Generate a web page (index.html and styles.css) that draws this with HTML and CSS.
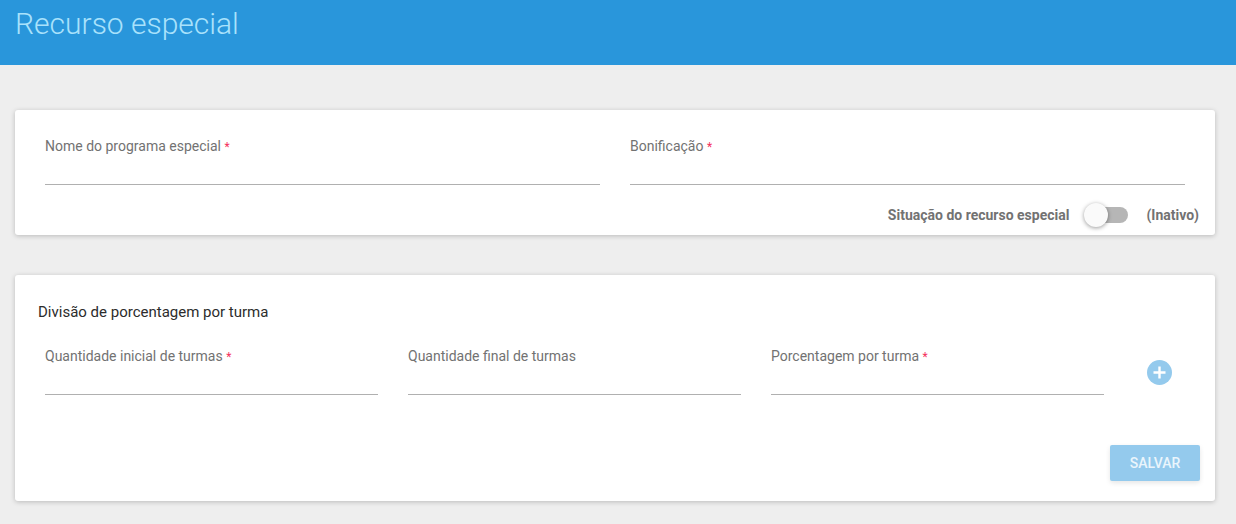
FILE: index.html
```html
<!DOCTYPE html>
<html lang="pt-BR">
<head>
<meta charset="utf-8">
<title>Recurso especial</title>
<link rel="stylesheet" href="styles.css">
</head>
<body>
<header class="page-header"><h1 class="page-title">Recurso especial</h1></header>
<main class="content">
  <section class="card card-main">
    <div class="row row-two">
      <div class="field"><label class="label">Nome do programa especial <span class="req">*</span></label><div class="line"></div></div>
      <div class="field"><label class="label">Bonificação <span class="req">*</span></label><div class="line"></div></div>
    </div>
    <div class="status">
      <span class="status-text">Situação do recurso especial</span>
      <span class="toggle"><span class="track"></span><span class="thumb"></span></span>
      <span class="status-text">(Inativo)</span>
    </div>
  </section>
  <section class="card card-split">
    <h2 class="section-title">Divisão de porcentagem por turma</h2>
    <div class="row row-three">
      <div class="field"><label class="label">Quantidade inicial de turmas <span class="req">*</span></label><div class="line"></div></div>
      <div class="field"><label class="label">Quantidade final de turmas</label><div class="line"></div></div>
      <div class="field"><label class="label">Porcentagem por turma <span class="req">*</span></label><div class="line"></div></div>
      <span class="add-btn">
        <svg width="25" height="25" viewBox="0 0 25 25"><circle cx="12.5" cy="12.5" r="12.5" fill="#94caed"/><path d="M12.5 6.5v12M6.5 12.5h12" stroke="#fff" stroke-width="2.4" fill="none"/></svg>
      </span>
    </div>
    <div class="actions"><button class="save" type="button">SALVAR</button></div>
  </section>
</main>
</body>
</html>
```
FILE: styles.css
```css
* { box-sizing: border-box; }
html, body { margin: 0; padding: 0; }
body { background: #eeeeee; font-family: Roboto, "Liberation Sans", sans-serif; height: 524px; overflow: hidden; }
.page-header { height: 65px; background: #2996db; padding: 5px 15px 0; }
.page-title { margin: 0; font-size: 30px; line-height: 37px; font-weight: 300; color: #a9e2fb; }
.content { padding: 45px 21px 0 15px; display: flex; flex-direction: column; gap: 40px; }
.card { background: #fff; border-radius: 3px; box-shadow: 0 1px 5px rgba(0,0,0,.22); }
.card-main { height: 125px; padding: 27px 16px 0 30px; }
.card-split { height: 226px; padding: 28px 15px 0 23px; }
.row { display: flex; }
.row-two { gap: 30px; padding-right: 14px; }
.row-three { gap: 30px; margin-top: 26px; padding-left: 7px; }
.row-three .field { flex: 0 0 333px; }
.row-two .field { flex: 1 1 0; }
.label { display: block; font-size: 14px; line-height: 18px; color: #727272; height: 47px; }
.req { color: #f4305c; font-size: 12px; }
.line { height: 1px; background: #b0b0b0; }
.status { display: flex; align-items: center; justify-content: flex-end; margin-top: 18px; height: 24px; }
.status-text { font-size: 14px; font-weight: 700; color: #727272; }
.toggle { position: relative; display: block; width: 34px; height: 16px; margin: 0 18px 0 25px; }
.track { position: absolute; left: 0; top: 0; width: 34px; height: 16px; border-radius: 8px; background: #b6b6b6; }
.thumb { position: absolute; left: -10px; top: -4px; width: 24px; height: 24px; border-radius: 50%; background: #fafafa; box-shadow: 0 1px 4px rgba(0,0,0,.4); }
.section-title { margin: 0; font-size: 15px; line-height: 18px; font-weight: 400; color: #2c2c2c; }
.add-btn { display: block; width: 25px; height: 25px; margin: 13px 0 0 13px; }
.add-btn svg { display: block; }
.actions { display: flex; justify-content: flex-end; margin-top: 50px; }
.save { width: 90px; height: 36px; border: 0; border-radius: 2px; background: #94caed; color: #eaf5fc; font: 500 14px Roboto, sans-serif; box-shadow: 0 2px 5px rgba(0,0,0,.1); }
```
